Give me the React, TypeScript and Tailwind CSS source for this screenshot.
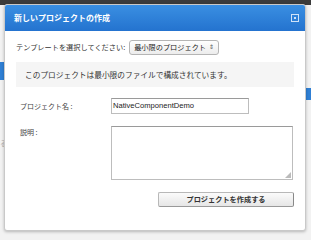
import React from 'react';

export default function App() {
  const font = { fontFamily: '"Noto Sans CJK JP", "Liberation Sans", sans-serif' };
  return (
    <div className="relative w-[311px] h-[240px] bg-[#f2f2f2] overflow-hidden" style={font}>
      {/* page behind the dialog */}
      <div className="h-[5px] bg-[#3b3b3b]" />
      <div className="absolute left-0 top-[62px] w-[4px] h-[18px] bg-[#2f7fd4]" />
      <div className="absolute right-0 top-[88px] w-[5px] h-[12px] bg-[#2f7fd4]" />
      <div className="absolute left-0 top-[138px] text-[7px] text-[#aaa]">る</div>

      {/* dialog */}
      <div className="absolute left-[4px] top-[4px] w-[302px] h-[227px] bg-white border border-[#c9c9c9] rounded-[3px] shadow-[0_1px_3px_rgba(0,0,0,0.25)] flex flex-col">
        <div className="h-[26px] flex items-center justify-between pl-[9px] pr-[6px] bg-gradient-to-b from-[#3a8fe2] to-[#2473cf] rounded-t-[2px]">
          <span className="text-white text-[8px] font-bold">新しいプロジェクトの作成</span>
          <span className="w-[8px] h-[8px] border border-[#cfe2f8] flex items-center justify-center">
            <span className="w-[2px] h-[2px] bg-[#cfe2f8]" />
          </span>
        </div>

        <div className="flex flex-col px-[11px] pt-[8px]">
          <div className="flex items-center gap-[4px] h-[16px]">
            <span className="text-[7.2px] text-[#333]">テンプレートを選択してください:</span>
            <div className="h-[15px] w-[90px] border border-[#b5b5b5] rounded-[3px] bg-gradient-to-b from-white to-[#ececec] flex items-center justify-between pl-[4px] pr-[4px]">
              <span className="text-[7.2px] text-[#222]">最小限のプロジェクト</span>
              <span className="text-[6px] text-[#555] leading-none">⇕</span>
            </div>
          </div>

          <div className="mt-[7px] h-[25px] bg-[#f5f5f5] flex items-center pl-[9px]">
            <span className="text-[7.7px] text-[#333]">このプロジェクトは最小限のファイルで構成されています。</span>
          </div>

          <div className="mt-[11px] flex items-center pl-[4px]">
            <span className="w-[91px] text-[7px] text-[#444]">プロジェクト名 :</span>
            <div className="w-[138px] h-[16px] border border-[#bdbdbd] border-t-[#9a9a9a] flex items-center pl-[1px]">
              <span className="text-[7.6px] text-[#222]" style={{ fontFamily: '"Liberation Sans", sans-serif' }}>NativeComponentDemo</span>
            </div>
          </div>

          <div className="mt-[12px] flex items-start pl-[4px]">
            <span className="w-[91px] text-[7px] text-[#444] pt-[1px]">説明 :</span>
            <div className="relative w-[182px] h-[54px] border border-[#bdbdbd] border-t-[#9a9a9a]">
              <span className="absolute right-[1px] bottom-[1px] w-0 h-0 border-l-[6px] border-l-transparent border-b-[6px] border-b-[#bbb]" />
            </div>
          </div>

          <div className="mt-[12px] flex justify-end">
            <div className="w-[136px] h-[15px] border border-[#b8b8b8] border-r-[#888] border-b-[#999] rounded-[2px] bg-gradient-to-b from-[#fbfbfb] to-[#e6e6e6] flex items-center justify-center">
              <span className="text-[7.2px] font-bold text-[#333]">プロジェクトを作成する</span>
            </div>
          </div>
        </div>
      </div>
    </div>
  );
}
